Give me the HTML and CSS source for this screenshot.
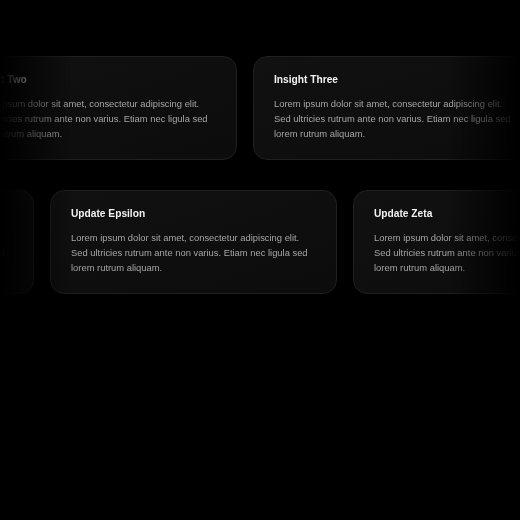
FILE: index.html
```html
<!DOCTYPE html>
<html lang="en">
<head>
<meta charset="utf-8">
<title>Cards</title>
<link rel="stylesheet" href="styles.css">
</head>
<body>
<div class="stage">
  <div class="row row-one">
    <div class="track">
      <article class="card"><h3 class="card-title">Insight One</h3><p class="card-text">Lorem ipsum dolor sit amet, consectetur adipiscing elit. Sed ultricies rutrum ante non varius. Etiam nec ligula sed lorem rutrum aliquam.</p></article>
      <article class="card"><h3 class="card-title">Insight Two</h3><p class="card-text">Lorem ipsum dolor sit amet, consectetur adipiscing elit. Sed ultricies rutrum ante non varius. Etiam nec ligula sed lorem rutrum aliquam.</p></article>
      <article class="card"><h3 class="card-title">Insight Three</h3><p class="card-text">Lorem ipsum dolor sit amet, consectetur adipiscing elit. Sed ultricies rutrum ante non varius. Etiam nec ligula sed lorem rutrum aliquam.</p></article>
      <article class="card"><h3 class="card-title">Insight Four</h3><p class="card-text">Lorem ipsum dolor sit amet, consectetur adipiscing elit. Sed ultricies rutrum ante non varius. Etiam nec ligula sed lorem rutrum aliquam.</p></article>
    </div>
  </div>
  <div class="row row-two">
    <div class="track">
      <article class="card"><h3 class="card-title">Update Delta</h3><p class="card-text">Lorem ipsum dolor sit amet, consectetur adipiscing elit. Sed ultricies rutrum ante non varius. Etiam nec ligula sed lorem rutrum aliquam.</p></article>
      <article class="card"><h3 class="card-title">Update Epsilon</h3><p class="card-text">Lorem ipsum dolor sit amet, consectetur adipiscing elit. Sed ultricies rutrum ante non varius. Etiam nec ligula sed lorem rutrum aliquam.</p></article>
      <article class="card"><h3 class="card-title">Update Zeta</h3><p class="card-text">Lorem ipsum dolor sit amet, consectetur adipiscing elit. Sed ultricies rutrum ante non varius. Etiam nec ligula sed lorem rutrum aliquam.</p></article>
      <article class="card"><h3 class="card-title">Update Eta</h3><p class="card-text">Lorem ipsum dolor sit amet, consectetur adipiscing elit. Sed ultricies rutrum ante non varius. Etiam nec ligula sed lorem rutrum aliquam.</p></article>
    </div>
  </div>
</div>
</body>
</html>
```
FILE: styles.css
```css
html, body {
  margin: 0;
  padding: 0;
  background: #000;
  height: 100%;
}
body {
  font-family: "Liberation Sans", Arial, sans-serif;
  color: #eee;
}
.stage {
  padding-top: 56px;
  display: flex;
  flex-direction: column;
  gap: 30px;
  overflow: hidden;
  -webkit-mask-image: linear-gradient(to right, transparent 0, #000 72px, #000 448px, transparent 520px);
  mask-image: linear-gradient(to right, transparent 0, #000 72px, #000 448px, transparent 520px);
}
.row {
  overflow: hidden;
}
.track {
  display: flex;
  gap: 16px;
  width: max-content;
}
.row-one .track {
  transform: translateX(-353px);
}
.row-two .track {
  transform: translateX(-253px);
}
.card {
  box-sizing: border-box;
  width: 287px;
  flex: none;
  padding: 16px 20px 18px;
  border: 1px solid #202020;
  border-radius: 14px;
  background: linear-gradient(160deg, #111 0%, #0c0c0c 100%);
}
.card-title {
  margin: 0;
  font-size: 10.2px;
  line-height: 13px;
  font-weight: 700;
  color: #f2f2f2;
}
.card-text {
  margin: 10px 0 0;
  font-size: 9.4px;
  line-height: 15px;
  color: #a6a6a6;
}
```
